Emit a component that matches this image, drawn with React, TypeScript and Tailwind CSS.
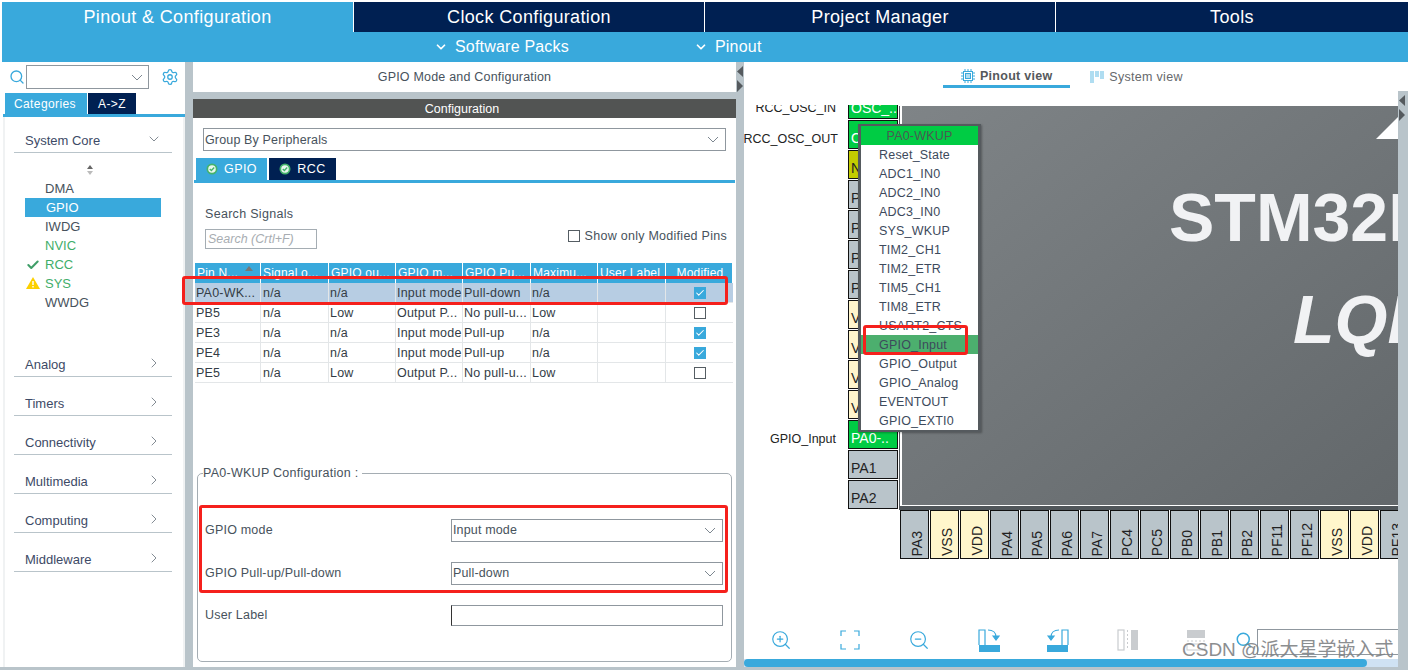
import React from "react";
import { ZoomIn, ZoomOut, Settings, Search, ChevronDown, ChevronRight, Check } from "lucide-react";

const BLUE = "bg-[#39a9dc]";

function Caret({ className = "" }: { className?: string }) {
  return (
    <svg width="12" height="7" viewBox="0 0 12 7" className={className}>
      <path d="M1 1l5 5 5-5" fill="none" stroke="#7d8790" strokeWidth="1" />
    </svg>
  );
}

function TabCheck() {
  return (
    <svg width="12" height="12" viewBox="0 0 12 12">
      <circle cx="6" cy="6" r="5.5" fill="#45b36b" />
      <circle cx="6" cy="6" r="3.8" fill="#e9f7ee" />
      <path d="M3.8 6l1.6 1.6 2.8-3" fill="none" stroke="#45b36b" strokeWidth="1.4" />
    </svg>
  );
}

function SelectBox({ label, className }: { label: string; className: string }) {
  return (
    <div className={`flex items-center justify-between border border-[#8f979e] pl-px pr-[6px] text-[#47525c] ${className}`}>
      <span className="pt-px tracking-[0.15px]">{label}</span>
      <Caret />
    </div>
  );
}

function Category({ label, open, className = "" }: { label: string; open?: boolean; className?: string }) {
  return (
    <div className={`flex items-center justify-between h-[24px] ml-[9px] w-[158px] border-b border-[#b9c4ca] pl-[11px] pr-[10px] text-[#3d4a66] ${className}`}>
      <span>{label}</span>
      {open ? (
        <ChevronDown size={16} strokeWidth={1.1} color="#56616c" className="mt-[-4px]" />
      ) : (
        <ChevronRight size={16} strokeWidth={1.1} color="#56616c" className="mt-[-4px]" />
      )}
    </div>
  );
}

const periph: [string, string, string][] = [
  ["DMA", "text-[#47525c]", ""],
  ["GPIO", "text-white", "sel"],
  ["IWDG", "text-[#47525c]", ""],
  ["NVIC", "text-[#3fae6a]", ""],
  ["RCC", "text-[#3fae6a]", "check"],
  ["SYS", "text-[#3fae6a]", "warn"],
  ["WWDG", "text-[#47525c]", ""],
];

function LeftPanel() {
  return (
    <div className="w-[183px] flex flex-col bg-white">
      <div className="h-[30px] flex items-center pl-[7px]">
        <Search size={16} strokeWidth={2} color="#39a9dc" />
        <div className="ml-[1px] w-[123px] h-[24px] border border-[#8f979e] flex items-center justify-end pr-[5px]">
          <Caret />
        </div>
        <Settings size={18} strokeWidth={1.7} color="#39a9dc" className="ml-[12px]" />
      </div>
      <div className="h-[21px] mt-px flex pl-[3px] gap-px text-[12px] tracking-[0.4px]">
        <div className={`w-[82px] ${BLUE} text-white flex items-center justify-center pr-[2px]`}>Categories</div>
        <div className="w-[48px] bg-[#002052] text-white flex items-center justify-center">A-&gt;Z</div>
      </div>
      <div className={`h-[3px] ${BLUE} ml-px`} />
      <div className="flex-1 ml-px border-l-2 border-r-2 border-[#f0f2f3] text-[13px] pt-[12px]">
        <Category label="System Core" open />
        <div className="flex justify-center w-[170px] mt-[11px] h-[12px]">
          <svg width="8" height="12" viewBox="0 0 8 12">
            <path d="M4 1l3 4H1z" fill="#666" />
            <path d="M4 11l3-4H1z" fill="#bbb" />
          </svg>
        </div>
        <div className="mt-[3px]">
          {periph.map(([n, c, f]) => (
            <div key={n} className={`relative h-[19px] ml-[20px] w-[136px] flex items-center text-[13px] ${f === "sel" ? BLUE : ""} ${c} ${f === "sel" ? "pl-[21px]" : "pl-[20px]"}`}>
              {f === "check" && <Check size={14} strokeWidth={3.5} color="#3f9e68" className="absolute left-[1px] top-[3px]" />}
              {f === "warn" && (
                <svg width="14" height="12" viewBox="0 0 14 12" className="absolute left-[1px] top-[3px]">
                  <path d="M7 0l7 12H0z" fill="#fcd000" />
                  <path d="M7 4v4M7 9v1.5" stroke="#fff" strokeWidth="1.4" />
                </svg>
              )}
              {n}
            </div>
          ))}
        </div>
        <Category label="Analog" className="mt-[41px]" />
        <Category label="Timers" className="mt-[15px]" />
        <Category label="Connectivity" className="mt-[15px]" />
        <Category label="Multimedia" className="mt-[15px]" />
        <Category label="Computing" className="mt-[15px]" />
        <Category label="Middleware" className="mt-[15px]" />
      </div>
    </div>
  );
}

const cols = "grid grid-cols-[66px_68px_67px_67px_68px_67px_68px_67px]";
const heads = ["Pin N...", "Signal o...", "GPIO ou...", "GPIO m...", "GPIO Pu...", "Maximu...", "User Label", "Modified"];
const rows: [string, string, string, string, string, string, string, boolean, boolean][] = [
  ["PA0-WK...", "n/a", "n/a", "Input mode", "Pull-down", "n/a", "", true, true],
  ["PB5", "n/a", "Low", "Output P...", "No pull-u...", "Low", "", false, false],
  ["PE3", "n/a", "n/a", "Input mode", "Pull-up", "n/a", "", true, false],
  ["PE4", "n/a", "n/a", "Input mode", "Pull-up", "n/a", "", true, false],
  ["PE5", "n/a", "Low", "Output P...", "No pull-u...", "Low", "", false, false],
];

function Box({ on }: { on: boolean }) {
  return on ? (
    <span className="w-[12px] h-[12px] bg-[#39a9dc] flex items-center justify-center">
      <Check size={10} strokeWidth={2.5} color="#fff" />
    </span>
  ) : (
    <span className="w-[12px] h-[12px] border border-[#555d63] bg-white" />
  );
}

function Table() {
  return (
    <div className="mt-[14px] ml-[2px] w-[538px]">
      <div className={`${cols} h-[20px] gap-0`}>
        {heads.map((h, i) => (
          <div key={h} className={`relative ${BLUE} text-white text-[12px] tracking-[0.2px] mr-px pl-[2px] flex items-center overflow-hidden whitespace-nowrap ${i === 7 ? "justify-center pl-0" : ""}`}>
            {h}
            {i === 0 && (
              <svg width="8" height="5" viewBox="0 0 8 5" className="absolute right-[7px] top-[3px]">
                <path d="M4 0l4 5H0z" fill="#777" />
              </svg>
            )}
          </div>
        ))}
      </div>
      {rows.map((r) => (
        <div key={r[0]} className={`${cols} h-[20px] border-b border-[#e3e6e8] ${r[8] ? "bg-[#b7cde3]" : ""}`}>
          {r.slice(0, 7).map((c, i) => (
            <div key={i} className={`border-r border-[#e3e6e8] pt-px text-[12.5px] tracking-[0.2px] text-[#333c45] flex items-center whitespace-nowrap overflow-hidden ${i === 1 ? "pl-[2px]" : "pl-px"}`}>
              {c as string}
            </div>
          ))}
          <div className="flex items-center justify-center">
            <Box on={r[7]} />
          </div>
        </div>
      ))}
    </div>
  );
}

function MiddlePanel() {
  return (
    <div className="w-[543px] flex flex-col">
      <div className="h-[30px] bg-white flex items-center justify-center text-[12.5px] text-[#47525c] tracking-[0.2px]">GPIO Mode and Configuration</div>
      <div className="h-[7px] bg-[#b9c4ca]" />
      <div className="h-[19px] bg-[#525453] flex items-center justify-center pr-[5px] pt-px text-white text-[12.5px]">Configuration</div>
      <div className="flex-1 bg-white relative text-[12.5px] text-[#47525c]">
        <SelectBox label="Group By Peripherals" className="mt-[10px] ml-[10px] w-[523px] h-[23px]" />
        <div className="mt-[7px] ml-[3px] flex gap-[2px] h-[22px] text-[12.5px] tracking-[0.4px] text-white">
          <div className={`w-[71px] ${BLUE} flex items-center justify-center gap-[6px]`}><TabCheck />GPIO</div>
          <div className="w-[67px] bg-[#002052] flex items-center justify-center gap-[6px]"><TabCheck />RCC</div>
        </div>
        <div className={`h-[3px] ${BLUE} ml-px mr-px`} />
        <div className="ml-[12px] mt-[24px] h-[15px] leading-[15px] tracking-[0.3px]">Search Signals</div>
        <div className="mt-[7px] ml-[12px] mr-[9px] flex items-center justify-between">
          <div className="w-[112px] h-[20px] border border-[#a5adb3] pl-[2px] flex items-center italic text-[#a8adb2] text-[12.5px]">Search (Crtl+F)</div>
          <div className="flex items-center gap-[5px] mt-[-6px] tracking-[0.27px]">
            <span className="w-[12px] h-[12px] border border-[#555d63]" />
            <span>Show only Modified Pins</span>
          </div>
        </div>
        <Table />
        <fieldset className="mt-[81px] ml-[4px] w-[535px] h-[198px] border border-[#a5adb3] rounded-[5px] pl-[7px] pr-[7px]">
          <legend className="px-0 ml-[-2px] mr-0 pr-[4px] text-[12.5px] text-[#47525c] tracking-[0.27px]">PA0-WKUP Configuration :</legend>
          <div className="mt-[36px] flex items-center h-[23px]">
            <span className="w-[246px] tracking-[0.2px]">GPIO mode</span>
            <SelectBox label="Input mode" className="w-[272px] h-[23px]" />
          </div>
          <div className="mt-[20px] flex items-center h-[23px]">
            <span className="w-[246px] tracking-[0.2px]">GPIO Pull-up/Pull-down</span>
            <SelectBox label="Pull-down" className="w-[272px] h-[23px]" />
          </div>
          <div className="mt-[20px] flex items-center h-[21px]">
            <span className="w-[246px] tracking-[0.2px]">User Label</span>
            <div className="w-[272px] h-[21px] border border-[#8f979e] border-l-[#333]" />
          </div>
        </fieldset>
      </div>
    </div>
  );
}

const leftPins: [string, string][] = [
  ["OSC_..", "g"], ["OSC_..", "g"], ["NRST", "y"], ["PC0", "n"], ["PC1", "n"], ["PC2", "n"], ["PC3", "n"],
  ["VSSA", "v"], ["VREF-", "v"], ["VREF+", "v"], ["VDDA", "v"], ["PA0-..", "g"], ["PA1", "n"], ["PA2", "n"],
];
const pinColor: Record<string, string> = {
  g: "bg-[#00cc44] text-white",
  y: "bg-[#c3cc00] text-[#222]",
  n: "bg-[#b9c4ca] text-[#222]",
  v: "bg-[#fff6cc] text-[#222]",
};
const bottomPins: [string, string][] = [
  ["PA3", "n"], ["VSS", "v"], ["VDD", "v"], ["PA4", "n"], ["PA5", "n"], ["PA6", "n"], ["PA7", "n"], ["PC4", "n"], ["PC5", "n"],
  ["PB0", "n"], ["PB1", "n"], ["PB2", "n"], ["PF11", "n"], ["PF12", "n"], ["VSS", "v"], ["VDD", "v"], ["PF13", "n"],
];
const menu = ["Reset_State", "ADC1_IN0", "ADC2_IN0", "ADC3_IN0", "SYS_WKUP", "TIM2_CH1", "TIM2_ETR", "TIM5_CH1", "TIM8_ETR", "USART2_CTS", "GPIO_Input", "GPIO_Output", "GPIO_Analog", "EVENTOUT", "GPIO_EXTI0"];

function ChipCanvas() {
  return (
    <div className="absolute left-0 top-[14px] right-0 bottom-[10px] overflow-hidden">
      {/* chip body */}
      <div className="absolute left-[155px] top-[1px] w-[520px] h-[404px] border-l border-b-[4px] border-[#50565a]">
        <div className="w-full h-full border-l-2 border-b border-white bg-gradient-to-br from-[#7f8487] to-[#62676a] relative overflow-hidden">
          <div className="absolute left-[267px] top-[72px] text-[68px] leading-[78px] font-bold text-[#f1f2f4] whitespace-nowrap">STM32F103</div>
          <div className="absolute left-[391px] top-[174px] text-[68px] leading-[78px] font-bold italic text-[#f1f2f4] whitespace-nowrap">LQFP</div>
          <svg width="24" height="24" viewBox="0 0 24 24" className="absolute left-[474px] top-[9px]">
            <path d="M0 24L22 2v22z" fill="#fff" />
          </svg>
        </div>
      </div>
      {/* labels */}
      <div className="absolute right-[562px] top-[-6px] text-[12.5px] text-[#222] h-[16px] whitespace-nowrap">RCC_OSC_IN</div>
      <div className="absolute right-[560px] top-[25px] text-[12.5px] text-[#222] h-[16px] whitespace-nowrap">RCC_OSC_OUT</div>
      <div className="absolute right-[562px] top-[325px] text-[12.5px] text-[#222] h-[16px] whitespace-nowrap">GPIO_Input</div>
      {/* left pins */}
      <div className="absolute left-[104px] top-[-15px] flex flex-col gap-px">
        {leftPins.map(([n, k], i) => (
          <div key={i} className={`w-[50px] h-[29px] border border-[#111] pl-[2px] pt-[9px] text-[14px] leading-[16px] overflow-hidden whitespace-nowrap ${pinColor[k]}`}>{n}</div>
        ))}
      </div>
      {/* bottom pins */}
      <div className="absolute left-[156px] top-[405px] flex gap-px">
        {bottomPins.map(([n, k], i) => (
          <div key={i} className={`w-[29px] h-[49px] border border-[#111] flex items-end justify-center overflow-hidden ${pinColor[k]}`}>
            <span className="[writing-mode:vertical-rl] rotate-180 text-[14px] leading-[16px] mb-[2px] ml-[5px] whitespace-nowrap">{n}</span>
          </div>
        ))}
      </div>
      {/* popup */}
      <div className="absolute left-[114px] top-[19px] w-[123px] border-[3px] border-[#555a5e] border-t-[2px] border-b-[2px] bg-white shadow-[1px_1px_2px_rgba(0,0,0,0.3)]">
        <div className="h-[19px] pt-px bg-[#00cc44] text-[#4a5a52] text-[12.5px] tracking-[0.2px] flex items-center justify-center">PA0-WKUP</div>
        {menu.map((m) => (
          <div key={m} className={`h-[19px] pt-px pl-[18px] text-[12.5px] tracking-[0.2px] text-[#3d4a5c] flex items-center ${m === "GPIO_Input" ? "bg-[#4caf6e]" : ""}`}>{m}</div>
        ))}
      </div>
    </div>
  );
}

function ToolIcons() {
  return (
    <div className="absolute left-[26px] bottom-[14px] flex items-center">
      <ZoomIn size={22} strokeWidth={1.3} color="#39a9dc" />
      <svg width="20" height="20" viewBox="0 0 20 20" className="ml-[48px]" fill="none" stroke="#39a9dc" strokeWidth="1.2">
        <path d="M1 6V1h5M14 1h5v5M19 14v5h-5M6 19H1v-5" />
      </svg>
      <ZoomOut size={22} strokeWidth={1.3} color="#39a9dc" className="ml-[48px]" />
      <svg width="22" height="26" viewBox="0 0 22 26" className="ml-[48px]" fill="none" stroke="#39a9dc" strokeWidth="1.2">
        <path d="M1 18V3h6v15" />
        <path d="M10 3c5 0 8 3 8 7" />
        <path d="M15 9l3 4 3-4z" fill="#39a9dc" />
        <rect x="1" y="18" width="21" height="7" fill="#39a9dc" stroke="none" />
      </svg>
      <svg width="22" height="26" viewBox="0 0 22 26" className="ml-[47px]" fill="none" stroke="#39a9dc" strokeWidth="1.2">
        <path d="M21 18V3h-6v15" />
        <path d="M12 3c-5 0-8 3-8 7" />
        <path d="M1 9l3 4 3-4z" fill="#39a9dc" />
        <rect x="0" y="18" width="21" height="7" fill="#39a9dc" stroke="none" />
      </svg>
      <svg width="22" height="22" viewBox="0 0 22 22" className="ml-[48px]">
        <rect x="1" y="1" width="6" height="20" fill="none" stroke="#c9cccf" strokeWidth="1.2" />
        <rect x="14" y="1" width="7" height="20" fill="#c9cccf" />
        <path d="M10.5 1v20" stroke="#c9cccf" strokeDasharray="2 2" />
      </svg>
      <svg width="20" height="22" viewBox="0 0 20 22" className="ml-[47px]">
        <rect x="1" y="1" width="18" height="8" fill="#c9cccf" />
        <path d="M1 12h18" stroke="#c9cccf" strokeDasharray="2 2" />
        <rect x="1" y="15" width="18" height="6" fill="none" stroke="#c9cccf" />
      </svg>
      <Search size={18} strokeWidth={2} color="#39a9dc" className="ml-[29px]" />
    </div>
  );
}

function RightPanel() {
  return (
    <div className="flex-1 flex flex-col bg-white">
      <div className="h-[29px] flex items-start justify-center pl-[1px]">
        <div className="ml-[-27px] w-[127px] h-[26px] pt-[5px] border-b-[3px] border-[#39a9dc] flex items-center justify-center gap-[5px] font-bold text-[12.5px] text-[#55595c] tracking-[0.3px]">
          <svg width="14" height="14" viewBox="0 0 14 14" fill="none" stroke="#39a9dc">
            <rect x="2.5" y="2.5" width="9" height="9" />
            <rect x="4.5" y="4.5" width="5" height="5" fill="#39a9dc" fillOpacity="0.4" />
            <path d="M4 0v2M7 0v2M10 0v2M4 12v2M7 12v2M10 12v2M0 4h2M0 7h2M0 10h2M12 4h2M12 7h2M12 10h2" />
          </svg>
          Pinout view
        </div>
        <div className="ml-[20px] h-[26px] pt-[5px] flex items-center gap-[5px] text-[12.5px] text-[#66696c] tracking-[0.3px]">
          <svg width="14" height="13" viewBox="0 0 14 13" stroke="#39a9dc" strokeWidth="0.8">
            <path d="M0 1h4M0 3h4M0 5h4M0 7h4M0 9h4M0 11h4M5 1h4M5 3h4M5 5h4M10 1h4M10 3h4M10 5h4M10 7h4" />
          </svg>
          System view
        </div>
      </div>
      <div className="flex-1 flex">
        <div className="flex-1 relative overflow-hidden">
          <ChipCanvas />
          <ToolIcons />
          <div className="absolute left-[513px] bottom-[12px] w-[145px] h-[26px] border border-[#8f979e] border-r-0" />
          <div className="absolute left-0 right-0 bottom-0 h-[8px] bg-[#cfe2f3]">
            <div className={`w-[623px] h-full rounded-full ${BLUE}`} />
          </div>
          <div className="absolute left-[438px] bottom-[6px] text-[19px] leading-[22px] text-[#7f8285] opacity-90 whitespace-nowrap font-['Liberation_Sans','Noto_Sans_CJK_SC',sans-serif]">CSDN @派大星学嵌入式</div>
        </div>
        <div className="w-[10px] bg-[#b9c4ca] pt-[3px]">
          <Arrows />
        </div>
      </div>
    </div>
  );
}

function Arrows() {
  return (
    <svg width="8" height="28" viewBox="0 0 8 28" className="block">
      <path d="M7 1v11L1 6.5z" fill="#555a5e" />
      <path d="M1 15v12l6-6z" fill="#555a5e" />
    </svg>
  );
}

export default function App() {
  return (
    <div className="w-[1408px] h-[670px] overflow-hidden bg-white pl-[2px] pt-[2px] relative font-['Liberation_Sans',Arial,sans-serif]">
      <div className="flex h-[30px] text-[18px] tracking-[0.36px] text-white gap-px">
        <div className={`w-[351px] ${BLUE} flex items-center justify-center`}>Pinout &amp; Configuration</div>
        <div className="w-[350px] bg-[#002052] flex items-center justify-center">Clock Configuration</div>
        <div className="w-[350px] bg-[#002052] flex items-center justify-center">Project Manager</div>
        <div className="flex-1 bg-[#002052] flex items-center justify-center">Tools</div>
      </div>
      <div className={`h-[30px] ${BLUE} flex items-center text-white text-[16px] tracking-[0.2px]`}>
        <div className="ml-[432px] flex items-center gap-[7px]"><ChevronDown size={14} strokeWidth={3} />Software Packs</div>
        <div className="ml-[125px] flex items-center gap-[7px]"><ChevronDown size={14} strokeWidth={3} />Pinout</div>
      </div>
      <div className={`flex h-[605px] border-t-0`}>
        <LeftPanel />
        <div className="w-[8px] bg-[#b9c4ca]" />
        <MiddlePanel />
        <div className="w-[8px] bg-[#b9c4ca] pt-[3px]">
          <Arrows />
        </div>
        <RightPanel />
      </div>
      <div className="h-[3px] bg-[#b9c4ca] ml-[-2px]" />
      {/* annotation rectangles */}
      <div className="absolute left-[182px] top-[276px] w-[546px] h-[29px] border-[3px] border-[#f5201c] rounded-[3px]" />
      <div className="absolute left-[199px] top-[505px] w-[529px] h-[88px] border-[3px] border-[#f5201c] rounded-[3px]" />
      <div className="absolute left-[863px] top-[325px] w-[105px] h-[30px] border-[3px] border-[#f5201c] rounded-[3px]" />
    </div>
  );
}
